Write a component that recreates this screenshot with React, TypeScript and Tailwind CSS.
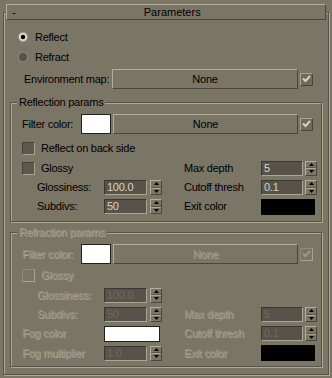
import React from "react";

const RAISED =
  "border border-t-[#b3ae9a] border-l-[#b3ae9a] border-r-[#4a463b] border-b-[#4a463b]";

function Check({ checked, disabled }: { checked?: boolean; disabled?: boolean }) {
  const cls = disabled
    ? "w-[13px] h-[13px] border border-t-[#8f8a79] border-l-[#8f8a79] border-r-[#a9a490] border-b-[#a9a490] bg-[#7b7566] flex items-center justify-center"
    : checked
    ? "w-[13px] h-[13px] border border-t-[#a9a490] border-l-[#a9a490] border-r-[#4a463b] border-b-[#4a463b] bg-[#6f6a5c] flex items-center justify-center"
    : "w-[13px] h-[13px] border border-t-[#46423a] border-l-[#46423a] border-r-[#a9a490] border-b-[#a9a490] bg-[#5d584c] flex items-center justify-center";
  return (
    <div className={cls}>
      {checked && (
        <svg width="9" height="8" viewBox="0 0 9 8">
          <path
            d="M1 3.5 L3.5 6 L8 1"
            fill="none"
            stroke={disabled ? "#9d9886" : "#d6d2c6"}
            strokeWidth="2"
          />
        </svg>
      )}
    </div>
  );
}

function Radio({ checked }: { checked?: boolean }) {
  return (
    <svg width="12" height="12" viewBox="0 0 12 12">
      {checked ? (
        <>
          <circle cx="6" cy="6" r="5.5" fill="#8d8878" />
          <circle cx="6" cy="6" r="4.2" fill="#dcd9cf" />
          <circle cx="6" cy="6" r="2.2" fill="#000" />
        </>
      ) : (
        <>
          <circle cx="6" cy="6" r="5.5" fill="#8a8575" />
          <circle cx="6" cy="6" r="4.2" fill="#57524a" />
        </>
      )}
    </svg>
  );
}

function Arrows() {
  return (
    <div className={"w-[12px] h-[15px] flex flex-col bg-[#7b7566] " + RAISED}>
      <div className="flex-1 flex items-center justify-center border-b border-[#5a5649]">
        <svg width="5" height="3" viewBox="0 0 5 3">
          <path d="M0 3 L2.5 0 L5 3 Z" fill="#000" />
        </svg>
      </div>
      <div className="flex-1 flex items-center justify-center border-t border-[#aca792]">
        <svg width="5" height="3" viewBox="0 0 5 3">
          <path d="M0 0 L2.5 3 L5 0 Z" fill="#000" />
        </svg>
      </div>
    </div>
  );
}

function Field({ value, disabled, w }: { value: string; disabled?: boolean; w: string }) {
  return (
    <div className="flex items-center">
      <div
        className={
          (w === "l" ? "w-[43px] " : "w-[42px] ") +
          "h-[15px] pl-[2px] flex items-center border border-t-[#3a3730] border-l-[#3a3730] border-r-[#aca792] border-b-[#aca792] " +
          (disabled ? "bg-[#57524a] text-[#6f6a5d]" : "bg-[#58534a] text-[#d8d4c6]")
        }
      >
        {value}
      </div>
      <div className={w === "l" ? "ml-[3px]" : "ml-[2px]"}>
        <Arrows />
      </div>
    </div>
  );
}

const DIS = "text-[#948f7e] [text-shadow:1px_1px_0_#aaa591]";

export default function App() {
  return (
    <div className="w-[332px] h-[378px] bg-[#7b7566] pt-[4px] overflow-hidden whitespace-nowrap font-['Liberation_Sans',Arial,sans-serif] text-[11px] tracking-[-0.25px] leading-none text-black select-none">
      {/* Rollout header */}
      <div className={"relative z-10 ml-[6px] w-[320px] h-[16px] bg-[#7b7566] flex items-center " + RAISED}>
        <span className="pl-[5px]">-</span>
        <span className="flex-1 text-center pl-[4px] tracking-normal">Parameters</span>
      </div>

      {/* Panel */}
      <div className="ml-[3px] mt-[-8px] w-[326px] h-[363px] border border-[#58544a] shadow-[inset_1px_1px_0_#aca792,1px_1px_0_#aca792] pt-[16px]">
        <div className="flex items-center h-[16px] pl-[13px]">
          <Radio checked />
          <span className="ml-[6px]">Reflect</span>
        </div>
        <div className="flex items-center h-[16px] pl-[13px] mt-[4px]">
          <Radio />
          <span className="ml-[6px]">Refract</span>
        </div>
        <div className="flex items-center h-[20px] pl-[20px] mt-[4px]">
          <span className="w-[88px]">Environment map:</span>
          <div className={"w-[186px] h-[20px] flex items-center justify-center " + RAISED}>None</div>
          <div className="ml-[2px]">
            <Check checked />
          </div>
        </div>

        {/* Reflection params */}
        <div className="relative ml-[6px] mt-[13px] w-[312px] h-[120px] border border-[#58544a] shadow-[inset_1px_1px_0_#aca792,1px_1px_0_#aca792] pl-[11px] pt-[11px]">
          <span className="absolute left-[6px] top-[-7px] bg-[#7b7566] px-[2px] leading-[13px]">
            Reflection params
          </span>
          <div className="flex items-center h-[20px]">
            <span className="w-[59px]">Filter color:</span>
            <div className="w-[30px] h-[20px] bg-white border border-[#22201b]" />
            <div className={"ml-[2px] w-[185px] h-[20px] flex items-center justify-center " + RAISED}>None</div>
            <div className="ml-[2px]">
              <Check checked />
            </div>
          </div>
          <div className="flex items-center h-[20px] mt-[4px]">
            <Check />
            <span className="ml-[6px]">Reflect on back side</span>
          </div>
          <div className="flex h-[20px]">
            <div className="w-[162px] flex items-center">
              <Check />
              <span className="ml-[6px]">Glossy</span>
            </div>
            <div className="flex items-center">
              <span className="w-[77px]">Max depth</span>
              <Field value="5" w="r" />
            </div>
          </div>
          <div className="flex h-[19px]">
            <div className="w-[162px] flex items-center">
              <span className="ml-[15px] w-[67px]">Glossiness:</span>
              <Field value="100.0" w="l" />
            </div>
            <div className="flex items-center">
              <span className="w-[77px]">Cutoff thresh</span>
              <Field value="0.1" w="r" />
            </div>
          </div>
          <div className="flex h-[19px]">
            <div className="w-[162px] flex items-center">
              <span className="ml-[15px] w-[67px]">Subdivs:</span>
              <Field value="50" w="l" />
            </div>
            <div className="flex items-center">
              <span className="w-[77px]">Exit color</span>
              <div className="w-[54px] h-[16px] bg-black" />
            </div>
          </div>
        </div>

        {/* Refraction params (disabled) */}
        <div className="relative ml-[6px] mt-[10px] w-[312px] h-[135px] border border-[#58544a] shadow-[inset_1px_1px_0_#aca792,1px_1px_0_#aca792] pl-[11px] pt-[11px]">
          <span className={"absolute left-[6px] top-[-7px] bg-[#7b7566] px-[2px] leading-[13px] " + DIS}>
            Refraction params
          </span>
          <div className="flex items-center h-[20px]">
            <span className={"w-[59px] " + DIS}>Filter color:</span>
            <div className="w-[30px] h-[20px] bg-white border border-[#22201b]" />
            <div className={"ml-[2px] w-[185px] h-[20px] flex items-center justify-center " + RAISED}>
              <span className={DIS}>None</span>
            </div>
            <div className="ml-[2px]">
              <Check checked disabled />
            </div>
          </div>
          <div className="flex items-center h-[20px] mt-[1px]">
            <Check disabled />
            <span className={"ml-[6px] " + DIS}>Glossy</span>
          </div>
          <div className="flex h-[20px]">
            <div className="w-[162px] flex items-center">
              <span className={"ml-[15px] w-[67px] " + DIS}>Glossiness:</span>
              <Field value="100.0" w="l" disabled />
            </div>
          </div>
          <div className="flex h-[19px]">
            <div className="w-[162px] flex items-center">
              <span className={"ml-[15px] w-[67px] " + DIS}>Subdivs:</span>
              <Field value="50" w="l" disabled />
            </div>
            <div className="flex items-center">
              <span className={"w-[77px] " + DIS}>Max depth</span>
              <Field value="5" w="r" disabled />
            </div>
          </div>
          <div className="flex h-[19px]">
            <div className="w-[162px] flex items-center">
              <span className={"w-[82px] " + DIS}>Fog color</span>
              <div className="w-[56px] h-[16px] bg-white border border-[#22201b]" />
            </div>
            <div className="flex items-center">
              <span className={"w-[77px] " + DIS}>Cutoff thresh</span>
              <Field value="0.1" w="r" disabled />
            </div>
          </div>
          <div className="flex h-[20px]">
            <div className="w-[162px] flex items-center">
              <span className={"w-[82px] " + DIS}>Fog multiplier</span>
              <Field value="1.0" w="l" disabled />
            </div>
            <div className="flex items-center">
              <span className={"w-[77px] " + DIS}>Exit color</span>
              <div className="w-[54px] h-[16px] bg-black" />
            </div>
          </div>
        </div>
      </div>
    </div>
  );
}
